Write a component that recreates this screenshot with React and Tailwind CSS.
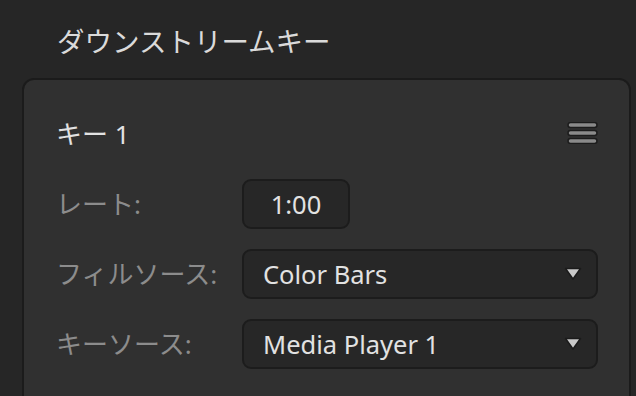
import React from "react";

const jp = { fontFamily: '"Noto Sans", "Noto Sans CJK JP", sans-serif' };

const Caret = () => (
    <svg width="18" height="14" viewBox="0 0 18 14" className="shrink-0">
        <path d="M1.5 1.5 L16.5 1.5 L9 12 Z" fill="#c9c9c9" stroke="#1b1b1b" strokeWidth="1.5" strokeLinejoin="round" />
    </svg>
);

const MenuIcon = () => (
    <svg width="31" height="22" viewBox="0 0 31 22">
        {[3, 11, 19].map(y => (
            <rect key={y} x="1" y={y - 2.5} width="29" height="5" rx="2.5" fill="#8a8a8a" stroke="#1c1c1c" strokeWidth="1.5" />
        ))}
    </svg>
);

const Select = ({ value }) => (
    <div className="flex items-center justify-between w-[356px] h-[50px] pl-[19px] pr-[14px] rounded-[9px] border-2 border-[#1c1c1c] bg-[#272727]">
        <span className="text-[25.5px] text-[#e2e2e2]">{value}</span>
        <Caret />
    </div>
);

const App = () => {
    return (
        <div className="w-[636px] h-[396px] overflow-hidden bg-[#262626]" style={jp}>
            <div className="pl-[57px] pt-[24px] h-[78px] text-[27.5px] leading-[36px] text-[#dadada]">
                ダウンストリームキー
            </div>
            <div className="ml-[22px] w-[609px] h-[340px] rounded-[12px] border-2 border-[#1b1b1b] bg-[#303030] pl-[32px] pr-[31px]">
                <div className="flex items-start justify-between pt-[37px] h-[99px]">
                    <span className="text-[26px] leading-[34px] text-[#e2e2e2]">キー 1</span>
                    <div className="mt-[5px]"><MenuIcon /></div>
                </div>
                <div className="flex flex-col gap-[20px]">
                    <div className="flex items-center">
                        <span className="w-[186px] text-[26px] text-[#8c8c8c]">レート:</span>
                        <div className="flex items-center justify-center w-[108px] h-[50px] rounded-[9px] border-2 border-[#1c1c1c] bg-[#272727] text-[25.5px] text-[#e2e2e2]">
                            1:00
                        </div>
                    </div>
                    <div className="flex items-center">
                        <span className="w-[186px] text-[26px] text-[#8c8c8c]">フィルソース:</span>
                        <Select value="Color Bars" />
                    </div>
                    <div className="flex items-center">
                        <span className="w-[186px] text-[26px] text-[#8c8c8c]">キーソース:</span>
                        <Select value="Media Player 1" />
                    </div>
                </div>
            </div>
        </div>
    );
};

export default App;
